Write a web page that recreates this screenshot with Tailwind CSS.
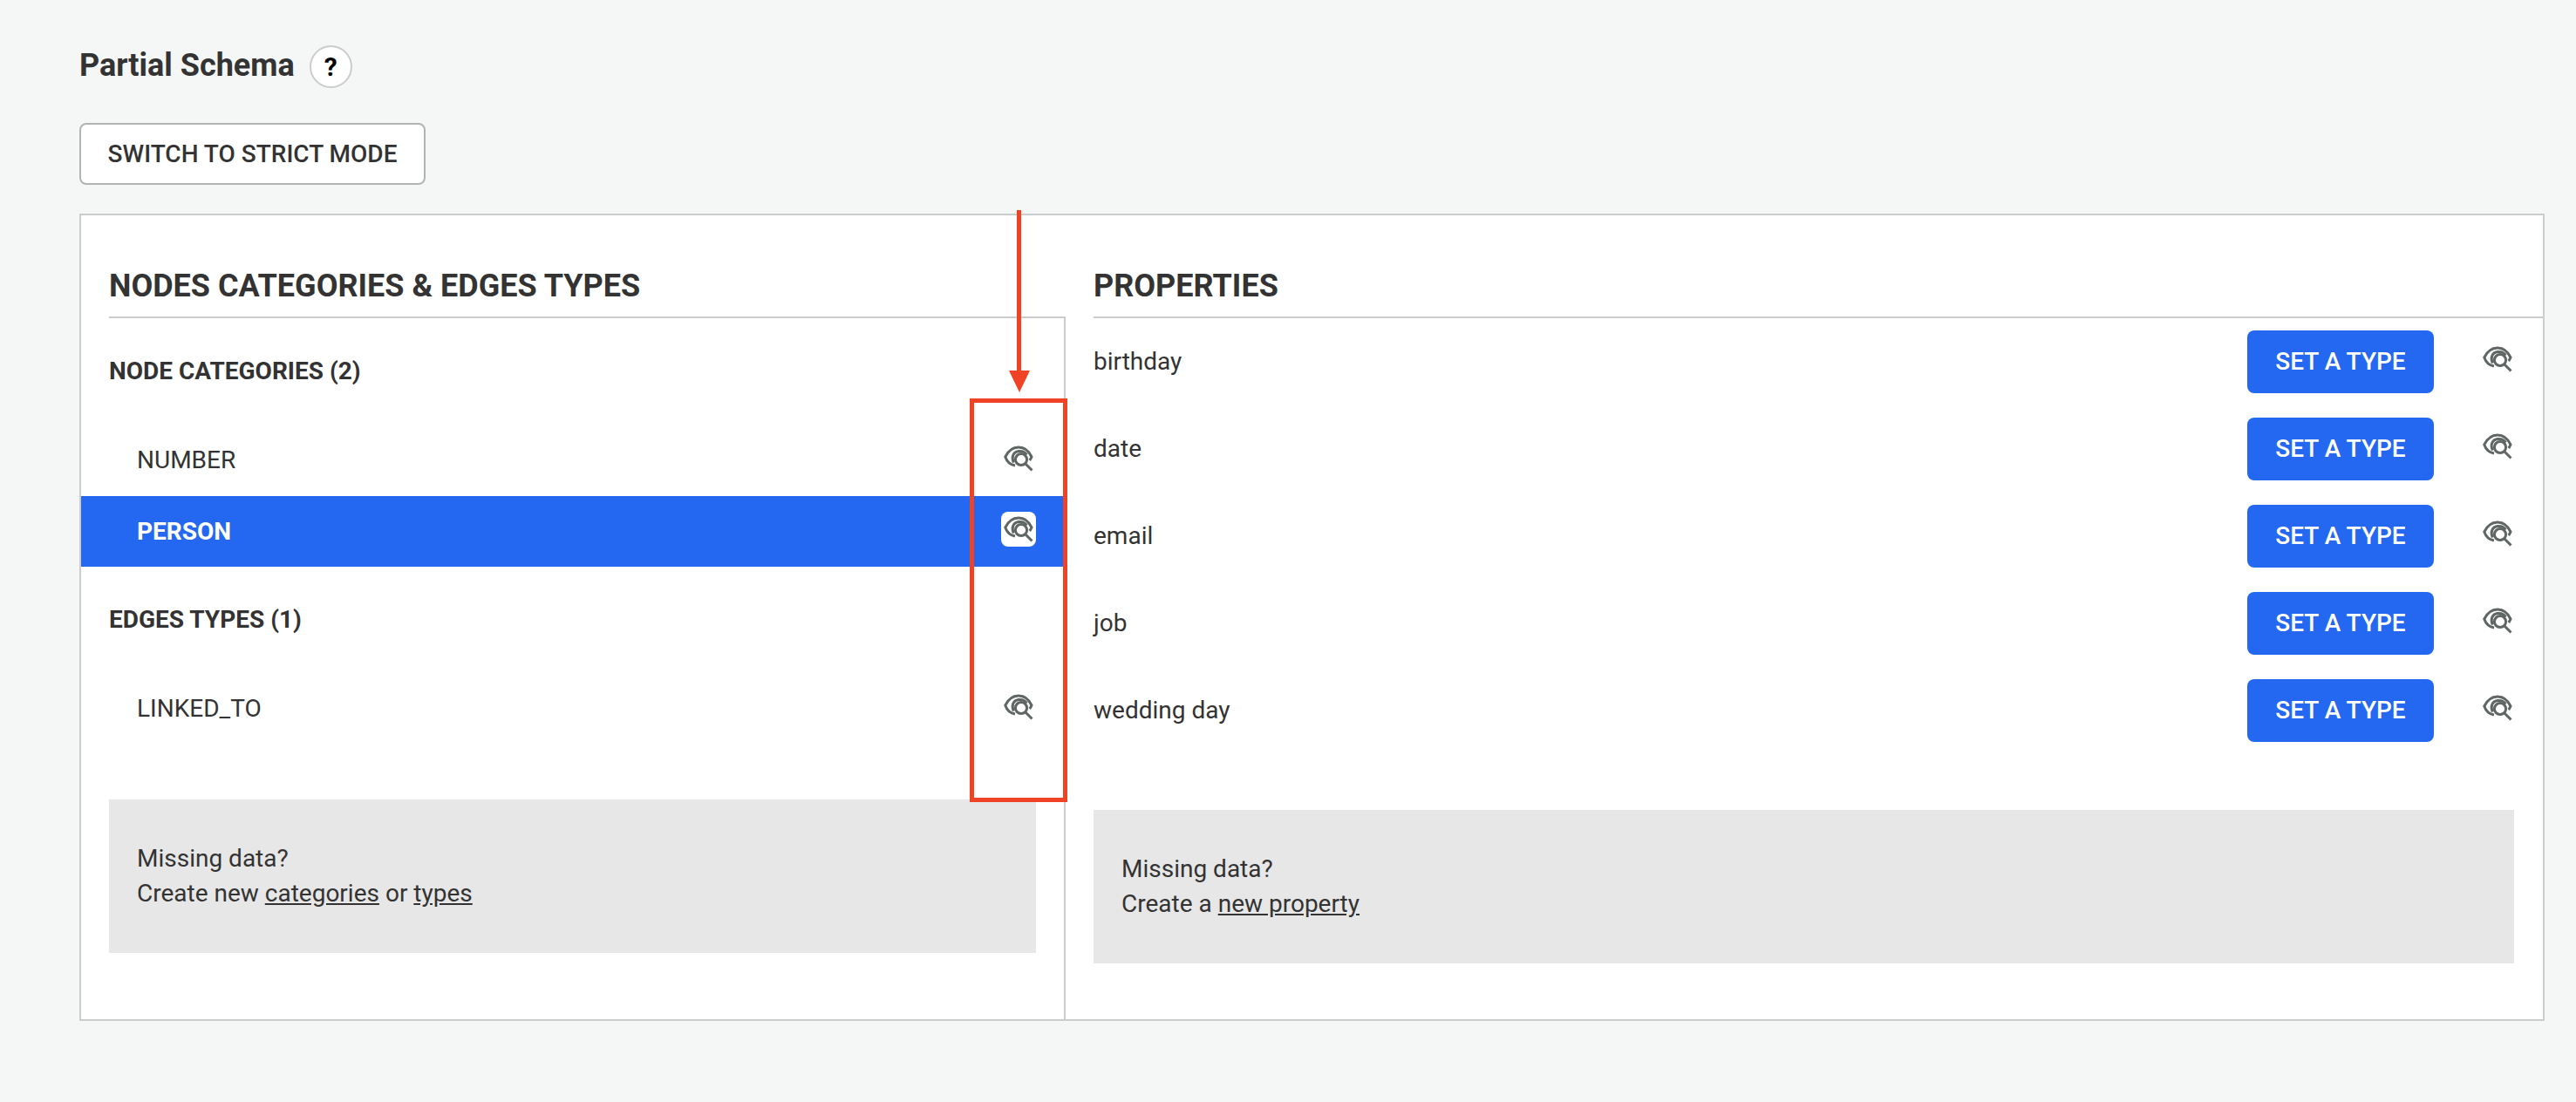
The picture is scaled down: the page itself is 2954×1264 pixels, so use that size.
<!DOCTYPE html>
<html lang="en">
<head>
    <meta charset="UTF-8">
    <title>Partial Schema</title>
    <script src="https://cdn.jsdelivr.net/npm/@tailwindcss/browser@4"></script>
</head>
<body class="bg-[#f5f7f6] h-[1264px] overflow-hidden font-['Roboto',sans-serif] text-[28px] text-[#333333]">
    <svg class="hidden">
        <symbol id="eye" viewBox="0 0 34 30">
            <path d="M13 23C7.5 22 3.5 18 1.8 13C5 6.5 10.5 2 17 2C23.5 2 29 6.5 32 13C31.4 14.5 30.6 15.8 29.7 17" fill="none" stroke="currentColor" stroke-width="3"/>
            <path d="M11.5 19.5C8.5 14 10.5 7.5 17 6.5C21 6 24.5 7.5 26.5 10.5" fill="none" stroke="currentColor" stroke-width="3"/>
            <circle cx="20" cy="16" r="6.6" fill="none" stroke="currentColor" stroke-width="3"/>
            <path d="M25 21L32.5 28.5" fill="none" stroke="currentColor" stroke-width="3"/>
        </symbol>
    </svg>

    <div class="relative h-full pl-[91px] pr-[36px] pt-[52px]">
        <div class="flex items-center gap-[17px] h-[49px]">
            <h1 class="text-[36px] font-bold pb-[3px]">Partial Schema</h1>
            <button class="w-[49px] h-[49px] rounded-full bg-white border-2 border-[#cccccc] text-[30px] font-bold text-black flex items-center justify-center">?</button>
        </div>

        <button class="mt-[40px] h-[71px] w-[397px] bg-white border-2 border-[#b3b3b3] rounded-[8px] font-medium">SWITCH TO STRICT MODE</button>

        <div class="mt-[33px] h-[926px] bg-white border-2 border-[#cccccc] flex">
            <!-- Left pane -->
            <section class="w-[1129px] shrink-0 flex flex-col">
                <div class="ml-[32px] h-[118px] flex items-end border-b-2 border-[#cccccc] pb-[10px]">
                    <h2 class="text-[36px] font-bold leading-[50px]">NODES CATEGORIES &amp; EDGES TYPES</h2>
                </div>
                <div class="flex-1 border-r-2 border-[#cccccc]">
                    <h3 class="pl-[32px] h-[121px] flex items-center font-bold">NODE CATEGORIES (2)</h3>
                    <div class="h-[83px] pl-[64px] pr-[35px] flex items-center justify-between">
                        <span>NUMBER</span>
                        <svg class="w-[34px] h-[30px] -translate-y-[2px] text-[#5f6664]"><use href="#eye"/></svg>
                    </div>
                    <div class="h-[81px] pl-[64px] pr-[32px] flex items-center justify-between bg-[#2468f2] text-white font-bold">
                        <span>PERSON</span>
                        <span class="w-[40px] h-[40px] -translate-y-[3px] bg-white rounded-[8px] flex items-center justify-center text-[#5f6664]">
                            <svg class="w-[34px] h-[30px]"><use href="#eye"/></svg>
                        </span>
                    </div>
                    <h3 class="pl-[32px] h-[121px] flex items-center font-bold">EDGES TYPES (1)</h3>
                    <div class="h-[83px] pl-[64px] pr-[35px] flex items-center justify-between">
                        <span>LINKED_TO</span>
                        <svg class="w-[34px] h-[30px] -translate-y-[2px] text-[#5f6664]"><use href="#eye"/></svg>
                    </div>
                    <div class="mt-[63px] ml-[32px] mr-[32px] h-[176px] bg-[#e7e7e7] px-[32px] flex flex-col justify-center leading-[40px]">
                        <p>Missing data?</p>
                        <p>Create new <a class="underline" href="#">categories</a> or <a class="underline" href="#">types</a></p>
                    </div>
                </div>
            </section>

            <!-- Right pane -->
            <section class="flex-1 flex flex-col pl-[32px]">
                <div class="h-[118px] flex items-end border-b-2 border-[#cccccc] pb-[10px]">
                    <h2 class="text-[36px] font-bold leading-[50px]">PROPERTIES</h2>
                </div>
                <div class="pt-[14px] pr-[35px] flex flex-col gap-[28px]">
                    <div class="flex items-center h-[72px]">
                        <span class="flex-1">birthday</span>
                        <button class="w-[214px] h-[72px] bg-[#2468f2] text-white font-medium rounded-[8px]">SET A TYPE</button>
                        <svg class="ml-[56px] w-[34px] h-[30px] -translate-y-[3px] text-[#5f6664]"><use href="#eye"/></svg>
                    </div>
                    <div class="flex items-center h-[72px]">
                        <span class="flex-1">date</span>
                        <button class="w-[214px] h-[72px] bg-[#2468f2] text-white font-medium rounded-[8px]">SET A TYPE</button>
                        <svg class="ml-[56px] w-[34px] h-[30px] -translate-y-[3px] text-[#5f6664]"><use href="#eye"/></svg>
                    </div>
                    <div class="flex items-center h-[72px]">
                        <span class="flex-1">email</span>
                        <button class="w-[214px] h-[72px] bg-[#2468f2] text-white font-medium rounded-[8px]">SET A TYPE</button>
                        <svg class="ml-[56px] w-[34px] h-[30px] -translate-y-[3px] text-[#5f6664]"><use href="#eye"/></svg>
                    </div>
                    <div class="flex items-center h-[72px]">
                        <span class="flex-1">job</span>
                        <button class="w-[214px] h-[72px] bg-[#2468f2] text-white font-medium rounded-[8px]">SET A TYPE</button>
                        <svg class="ml-[56px] w-[34px] h-[30px] -translate-y-[3px] text-[#5f6664]"><use href="#eye"/></svg>
                    </div>
                    <div class="flex items-center h-[72px]">
                        <span class="flex-1">wedding day</span>
                        <button class="w-[214px] h-[72px] bg-[#2468f2] text-white font-medium rounded-[8px]">SET A TYPE</button>
                        <svg class="ml-[56px] w-[34px] h-[30px] -translate-y-[3px] text-[#5f6664]"><use href="#eye"/></svg>
                    </div>
                </div>
                <div class="mt-[78px] mr-[33px] h-[176px] bg-[#e7e7e7] px-[32px] flex flex-col justify-center leading-[40px]">
                    <p>Missing data?</p>
                    <p>Create a <a class="underline" href="#">new property</a></p>
                </div>
            </section>
        </div>

        <!-- Red annotation over the page -->
        <div class="absolute left-[1166px] top-[241px] w-[5px] h-[190px] bg-[#f04224]"></div>
        <div class="absolute left-[1157px] top-[425px] w-0 h-0 border-x-[12px] border-x-transparent border-t-[25px] border-t-[#f04224]"></div>
        <div class="absolute left-[1112px] top-[457px] w-[112px] h-[463px] border-[5px] border-[#f04224]"></div>
    </div>
</body>
</html>
